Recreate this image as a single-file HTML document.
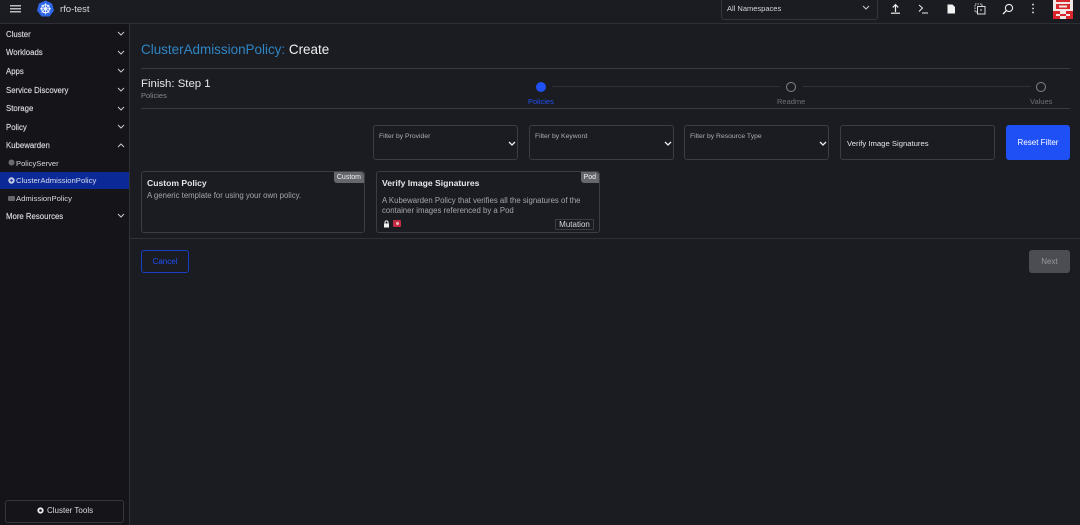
<!DOCTYPE html>
<html><head><meta charset="utf-8"><title>ClusterAdmissionPolicy: Create</title>
<style>
html,body{margin:0;padding:0;background:#1b1c21;}
body{width:1080px;height:525px;position:relative;overflow:hidden;font-family:"Liberation Sans",sans-serif;color:#e6e6e8;}
#w{position:absolute;left:0;top:0;width:1080px;height:525px;filter:blur(.3px);}
.a{position:absolute;white-space:nowrap;}
.hr{position:absolute;height:1px;background:#3a3b40;}
.nav{position:absolute;left:6px;font-size:7.8px;color:#d8d9dc;line-height:10px;white-space:nowrap;-webkit-text-stroke:.15px #d8d9dc;}
.chev{position:absolute;left:117px;width:8px;height:5px;}
.sel{position:absolute;top:125px;height:33px;border:1px solid #3c3d42;border-radius:3px;width:143px;}
.sel span{position:absolute;left:5px;top:7px;font-size:6.8px;color:#acadb1;white-space:nowrap;}
.sel svg{position:absolute;right:1px;top:15px;}
.card{position:absolute;top:171px;height:60px;border:1px solid #3c3d42;border-radius:3px;}
.tag{position:absolute;right:0;top:0;background:#66676d;color:#eee;font-size:7px;line-height:11px;height:11px;padding:0 3px;border-radius:0 3px 0 3px;}
.t{position:absolute;left:5px;top:6px;white-space:nowrap;font-size:8.6px;line-height:11px;font-weight:bold;color:#e6e6e8;}
</style></head><body><div id="w">

<div class="a" style="left:0;top:0;width:1080px;height:23px;background:#1b1c21;border-bottom:1px solid #2f3035"></div>
<div class="a" style="left:0;top:24px;width:129px;height:501px;background:#141419;border-right:1px solid #303136"></div>

<svg class="a" style="left:10px;top:5px" width="12" height="8"><path d="M0 .8H11M0 3.8H11M0 6.8H11" stroke="#f2f2f2" stroke-width="1.2"/></svg>
<svg class="a" style="left:36px;top:0" width="19" height="18" viewBox="0 0 19 18"><path d="M9.5 .5L16 3.5L18 10.5L13.5 16.5H5.5L1 10.5L3 3.5Z" fill="#2f66e8"/><circle cx="9.5" cy="8.8" r="4" fill="none" stroke="#fff" stroke-width="1"/><path d="M9.5 3.2V14.4M4 8.8H15M5.6 4.9L13.4 12.7M13.4 4.9L5.6 12.7" stroke="#fff" stroke-width=".8"/></svg>
<div class="a" style="left:60px;top:4px;font-size:9.5px;line-height:12px;color:#d8d8da">rfo-test</div>

<div class="a" style="left:721px;top:-2px;width:155px;height:20px;border:1px solid #36373c;border-radius:3px"></div>
<div class="a" style="left:727px;top:4px;font-size:7.5px;line-height:10px;color:#d5d5d8">All Namespaces</div>
<svg class="a" style="left:862px;top:5px" width="8" height="6"><path d="M1 1L4 4L7 1" fill="none" stroke="#ccc" stroke-width="1"/></svg>

<svg class="a" style="left:890px;top:3px" width="11" height="11"><path d="M5.5 9V2M2.8 4.4L5.5 1.6L8.2 4.4" fill="none" stroke="#eee" stroke-width="1.2"/><path d="M1 10.2H10" stroke="#eee" stroke-width="1.2"/></svg>
<svg class="a" style="left:918px;top:4px" width="11" height="10"><path d="M1 1L4.5 4L1 7.5" fill="none" stroke="#eee" stroke-width="1"/><path d="M4 9H10" stroke="#eee" stroke-width="1"/></svg>
<svg class="a" style="left:947px;top:4px" width="9" height="10"><path d="M.5 .5H5.5L8 3V9.5H.5Z" fill="#f2f2f2"/></svg>
<svg class="a" style="left:974px;top:3px" width="12" height="12"><path d="M3 9H1V1H8V3" fill="none" stroke="#ccc" stroke-width="1" stroke-dasharray="1.5 1"/><rect x="3.5" y="3.5" width="7.5" height="7.5" fill="none" stroke="#ddd" stroke-width="1"/><path d="M7 6V8" stroke="#ddd"/></svg>
<svg class="a" style="left:1002px;top:3px" width="12" height="12"><circle cx="7" cy="5" r="3.6" fill="none" stroke="#eee" stroke-width="1.1"/><path d="M4.4 7.6L1 11" stroke="#eee" stroke-width="1.3"/></svg>
<svg class="a" style="left:1031px;top:3px" width="4" height="11"><path d="M2 .8V2.4M2 4.7V6.3M2 8.6V10.2" stroke="#eee" stroke-width="1.5"/></svg>
<svg class="a" style="left:1053px;top:0" width="20" height="19" shape-rendering="crispEdges"><rect width="20" height="19" fill="#efe8e6"/><path d="M3 0H17V2H3ZM3 4H17V9H3ZM0 11H20V19H0Z" fill="#d8262c"/><path d="M6 5.5H14V7.5H6ZM7 11H13V14H7ZM3 14H7V16H3ZM13 14H17V16H13ZM7 16H13V19H7Z" fill="#efe8e6"/></svg>

<!-- Sidebar -->
<div class="nav" style="top:30px">Cluster</div>
<div class="nav" style="top:48px">Workloads</div>
<div class="nav" style="top:67px">Apps</div>
<div class="nav" style="top:86px">Service Discovery</div>
<div class="nav" style="top:104px">Storage</div>
<div class="nav" style="top:123px">Policy</div>
<div class="nav" style="top:141px">Kubewarden</div>
<div class="nav" style="top:212px">More Resources</div>
<svg class="chev" style="top:31px"><path d="M1 1L4 4L7 1" fill="none" stroke="#c8c8cc" stroke-width="1"/></svg>
<svg class="chev" style="top:50px"><path d="M1 1L4 4L7 1" fill="none" stroke="#c8c8cc" stroke-width="1"/></svg>
<svg class="chev" style="top:68px"><path d="M1 1L4 4L7 1" fill="none" stroke="#c8c8cc" stroke-width="1"/></svg>
<svg class="chev" style="top:87px"><path d="M1 1L4 4L7 1" fill="none" stroke="#c8c8cc" stroke-width="1"/></svg>
<svg class="chev" style="top:106px"><path d="M1 1L4 4L7 1" fill="none" stroke="#c8c8cc" stroke-width="1"/></svg>
<svg class="chev" style="top:124px"><path d="M1 1L4 4L7 1" fill="none" stroke="#c8c8cc" stroke-width="1"/></svg>
<svg class="chev" style="top:143px"><path d="M1 4L4 1L7 4" fill="none" stroke="#c8c8cc" stroke-width="1"/></svg>
<svg class="chev" style="top:213px"><path d="M1 1L4 4L7 1" fill="none" stroke="#c8c8cc" stroke-width="1"/></svg>

<div class="a" style="left:0;top:172px;width:129px;height:17px;background:#0b2a97"></div>
<svg class="a" style="left:8px;top:159px" width="7" height="7"><circle cx="3.5" cy="3.5" r="3" fill="#6a6b70"/></svg>
<div class="a" style="left:16px;top:159px;font-size:7.6px;line-height:10px;color:#d8d9dc">PolicyServer</div>
<svg class="a" style="left:8px;top:177px" width="7" height="7"><circle cx="3.5" cy="3.5" r="3.2" fill="#c5cbe6"/><circle cx="3.5" cy="3.5" r="1.2" fill="#0b2a97"/></svg>
<div class="a" style="left:16px;top:176px;font-size:7.7px;line-height:10px;color:#d8dcee">ClusterAdmissionPolicy</div>
<div class="a" style="left:8px;top:196px;width:7px;height:5px;background:#66676c;border-radius:1px"></div>
<div class="a" style="left:16px;top:194px;font-size:7.7px;line-height:10px;color:#d8d9dc">AdmissionPolicy</div>

<div class="a" style="left:5px;top:500px;width:117px;height:21px;border:1px solid #36373c;border-radius:3px"></div>
<svg class="a" style="left:37px;top:507px" width="7" height="7"><circle cx="3.5" cy="3.5" r="2.2" fill="none" stroke="#f0f0f0" stroke-width="1.8"/></svg>
<div class="a" style="left:47px;top:506px;font-size:8px;line-height:10px;color:#dcdcde">Cluster Tools</div>

<!-- Header -->
<div class="a" style="left:141px;top:41px;font-size:13.45px;line-height:17px"><span style="color:#2f85c4">ClusterAdmissionPolicy:</span> <span style="color:#f0f0f0">Create</span></div>
<div class="hr" style="left:141px;top:68px;width:929px"></div>
<div class="a" style="left:141px;top:77px;font-size:11.4px;line-height:15px;color:#e8e8ea">Finish: Step 1</div>
<div class="a" style="left:141px;top:91px;font-size:7.5px;line-height:9px;color:#85868b">Policies</div>
<div class="hr" style="left:141px;top:108px;width:929px"></div>

<!-- Steps -->
<div class="a" style="left:536px;top:81.5px;width:10px;height:10px;border-radius:50%;background:#1f50f5"></div>
<div class="a" style="left:552px;top:86px;width:228px;height:1px;background:#303136"></div>
<div class="a" style="left:786px;top:82px;width:8px;height:8px;border-radius:50%;border:1px solid #85868b"></div>
<div class="a" style="left:803px;top:86px;width:228px;height:1px;background:#303136"></div>
<div class="a" style="left:1036px;top:82px;width:8px;height:8px;border-radius:50%;border:1px solid #85868b"></div>
<div class="a" style="left:528px;top:97px;font-size:7.5px;line-height:9px;color:#1f50f5">Policies</div>
<div class="a" style="left:777px;top:97px;font-size:7.5px;line-height:9px;color:#6f7075">Readme</div>
<div class="a" style="left:1030px;top:97px;font-size:7.5px;line-height:9px;color:#6f7075">Values</div>

<!-- Filters -->
<div class="sel" style="left:373px"><span>Filter by Provider</span><svg width="8" height="6"><path d="M1 1L4 4L7 1" fill="none" stroke="#eee" stroke-width="1.3"/></svg></div>
<div class="sel" style="left:529px"><span>Filter by Keyword</span><svg width="8" height="6"><path d="M1 1L4 4L7 1" fill="none" stroke="#eee" stroke-width="1.3"/></svg></div>
<div class="sel" style="left:684px"><span>Filter by Resource Type</span><svg width="8" height="6"><path d="M1 1L4 4L7 1" fill="none" stroke="#eee" stroke-width="1.3"/></svg></div>
<div class="sel" style="left:840px;width:153px"><span style="left:6px;top:13px;font-size:7.7px;line-height:9px;color:#e4e4e6">Verify Image Signatures</span></div>
<div class="a" style="left:1006px;top:125px;width:64px;height:35px;background:#1f50f5;border-radius:3px;color:#fff;font-size:8px;line-height:35px;text-align:center">Reset Filter</div>

<!-- Cards -->
<div class="card" style="left:141px;width:222px">
<div class="tag">Custom</div>
<div class="t">Custom Policy</div>
<div class="a" style="left:5px;top:18.5px;font-size:7.8px;line-height:9px;color:#a5a6aa">A generic template for using your own policy.</div>
</div>
<div class="card" style="left:376px;width:222px">
<div class="tag">Pod</div>
<div class="t">Verify Image Signatures</div>
<div class="a" style="left:5px;top:24px;font-size:7.8px;line-height:9.5px;color:#a5a6aa">A Kubewarden Policy that verifies all the signatures of the<br>container images referenced by a Pod</div>
<svg class="a" style="left:6px;top:48px" width="7" height="8"><path d="M2 4V2.4A1.5 1.5 0 0 1 5 2.4V4" fill="none" stroke="#eee"/><rect x="1" y="3.5" width="5" height="4" fill="#f0f0f0"/></svg>
<div class="a" style="left:16px;top:48px;width:8px;height:7px;background:#c22a41;border-radius:1px"></div>
<div class="a" style="left:18.5px;top:50px;width:3px;height:3px;background:#f0b8c0;border-radius:50%"></div>
<div class="a" style="left:178px;top:47px;width:37px;height:9px;border:1px solid #3c3d42;border-radius:1px;font-size:8px;line-height:10px;text-align:center;color:#d8d8da">Mutation</div>
</div>

<div class="hr" style="left:130px;top:238px;width:950px;background:#2f3035"></div>

<!-- Buttons -->
<div class="a" style="left:141px;top:250px;width:46px;height:21px;border:1px solid #1a3fc4;border-radius:3px;color:#1f50f5;font-size:8px;line-height:22px;text-align:center">Cancel</div>
<div class="a" style="left:1029px;top:250px;width:41px;height:23px;background:#4c4d52;border-radius:3px;color:#97989c;font-size:8px;line-height:24px;text-align:center">Next</div>

</div></body></html>
